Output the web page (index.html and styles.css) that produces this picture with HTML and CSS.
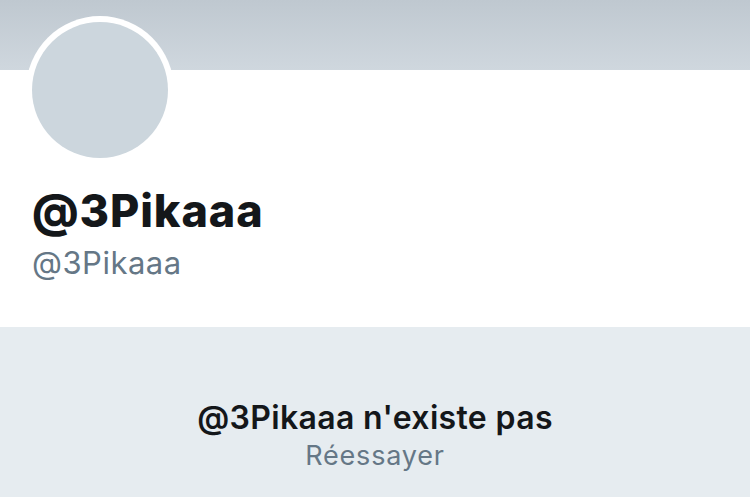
FILE: index.html
```html
<!DOCTYPE html>
<html lang="fr">
<head>
	<meta charset="UTF-8" />
	<meta name="viewport" content="width=device-width, initial-scale=1.0" />
	<title>@3Pikaaa</title>
	<link rel="stylesheet" href="styles.css">
</head>
<body>
	<!-- Profile header -->
	<header class="profile">
		<div class="banner"></div>
		<div class="avatar"><span class="avatar-img"></span></div>
		<div class="names">
			<h1 class="display-name">@3Pikaaa</h1>
			<div class="handle">@3Pikaaa</div>
		</div>
	</header>
	<!-- End of Profile header -->

	<!-- Empty state -->
	<section class="empty">
		<h2 class="empty-title">@3Pikaaa n'existe pas</h2>
		<a class="retry" href="#">Réessayer</a>
	</section>
</body>
</html>
```

FILE: styles.css
```css
:root {
	--banner-top: #bfc8d0;
	--banner-bottom: #cfd7de;
	--avatar: #ccd6dd;
	--dark: #14171a;
	--grey: #657786;
	--bg: #e6ecf0;
}

* {
	margin: 0;
	padding: 0;
	box-sizing: border-box;
}

html, body {
	height: 100%;
}

body {
	font-family: Inter, "Noto Sans", sans-serif;
	background: var(--bg);
	color: var(--dark);
	overflow: hidden;
}

.profile {
	position: relative;
	background: #fff;
	height: 327px;
}

.banner {
	height: 70px;
	background: linear-gradient(var(--banner-top), var(--banner-bottom));
}

.avatar {
	position: absolute;
	left: 26px;
	top: 16px;
	width: 148px;
	height: 148px;
	border-radius: 50%;
	background: #fff;
	padding: 6px;
}

.avatar-img {
	display: block;
	width: 100%;
	height: 100%;
	border-radius: 50%;
	background: var(--avatar);
}

.names {
	padding: 114px 0 0 32px;
}

.display-name {
	font-size: 45px;
	font-weight: 800;
	line-height: 54px;
	letter-spacing: 0.9px;
}

.handle {
	font-size: 31px;
	line-height: 38px;
	letter-spacing: 0.5px;
	color: var(--grey);
	margin-top: 6px;
}

.empty {
	display: flex;
	flex-direction: column;
	align-items: center;
	padding-top: 71px;
}

.empty-title {
	font-size: 32px;
	font-weight: 600;
	line-height: 40px;
	letter-spacing: 0.35px;
}

.retry {
	font-size: 27px;
	line-height: 34px;
	letter-spacing: 0.8px;
	margin-top: 1px;
	color: var(--grey);
	text-decoration: none;
}
```
